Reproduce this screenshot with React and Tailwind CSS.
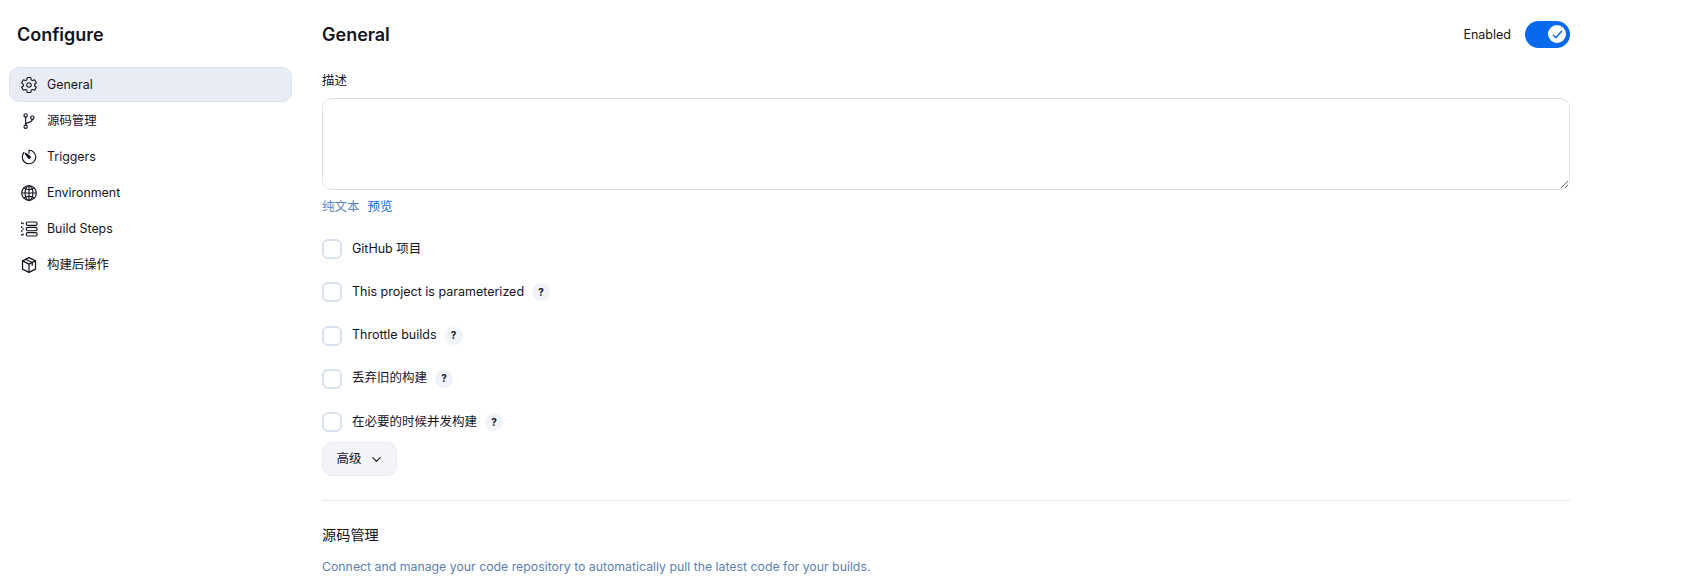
import React from "react";
import {
  IoSettingsOutline,
  IoGitBranchOutline,
  IoTimerOutline,
  IoGlobeOutline,
  IoChevronDownOutline,
  IoCheckmark,
} from "react-icons/io5";

const FONT = { fontFamily: "Inter, 'Noto Sans CJK SC', sans-serif" };

const StepsIcon = ({ className }) => (
  <svg viewBox="0 0 20 20" fill="none" stroke="currentColor" strokeWidth="1.3" className={className}>
    <rect x="7" y="2.2" width="12" height="3.8" rx="1.6" />
    <rect x="7" y="8.1" width="12" height="3.8" rx="1.6" />
    <rect x="7" y="14" width="12" height="3.8" rx="1.6" />
    <path d="M2 2.5v2M2 7v2M2 11v2M2 15.5v2" strokeWidth="1.5" />
    <circle cx="3.4" cy="4" r="0.9" fill="currentColor" stroke="none" />
    <circle cx="3.4" cy="10" r="0.9" fill="currentColor" stroke="none" />
    <circle cx="3.4" cy="16" r="0.9" fill="currentColor" stroke="none" />
  </svg>
);

const BoxIcon = ({ className }) => (
  <svg viewBox="0 0 20 20" fill="none" stroke="currentColor" strokeWidth="1.4" strokeLinejoin="round" className={className}>
    <path d="M10 1.8l7.2 3.6v9.2L10 18.2l-7.2-3.6V5.4z" />
    <path d="M2.8 5.4L10 9l7.2-3.6M10 9v9.2" />
    <path d="M6.2 3.6l7.4 3.6v3.6" />
  </svg>
);

const ICON_CLS = "h-[18px] w-[18px] shrink-0 [&_*]:stroke-[32px]";

const NAV = [
  { label: "General", Icon: IoSettingsOutline, cls: ICON_CLS, active: true },
  { label: "源码管理", Icon: IoGitBranchOutline, cls: ICON_CLS },
  { label: "Triggers", Icon: IoTimerOutline, cls: ICON_CLS },
  { label: "Environment", Icon: IoGlobeOutline, cls: ICON_CLS },
  { label: "Build Steps", Icon: StepsIcon, cls: "h-[18px] w-[18px] shrink-0" },
  { label: "构建后操作", Icon: BoxIcon, cls: "h-[18px] w-[18px] shrink-0" },
];

const OPTIONS = [
  { label: "GitHub 项目" },
  { label: "This project is parameterized", help: true },
  { label: "Throttle builds", help: true },
  { label: "丢弃旧的构建", help: true },
  { label: "在必要的时候并发构建", help: true },
];

const Option = ({ label, help }) => (
  <div className="flex h-[20px] items-center">
    <span className="h-[20px] w-[20px] shrink-0 rounded-[6px] border-2 border-[#d9e1ec] bg-white"></span>
    <span className="ml-[10px] text-[12.5px] text-[#14141f]">{label}</span>
    {help && (
      <span className="ml-[8px] flex h-[18px] w-[18px] items-center justify-center rounded-full bg-[#f0f3f7] text-[10px] font-bold text-[#14141f]">
        ?
      </span>
    )}
  </div>
);

export default function App() {
  return (
    <div className="flex h-[584px] overflow-hidden bg-white" style={FONT}>
      <aside className="w-[322px] shrink-0 pl-[9px]">
        <h1 className="mt-[22px] pl-[8px] text-[18px] leading-[26px] font-semibold text-[#14141f]">Configure</h1>
        <nav className="mt-[19px] flex w-[283px] flex-col gap-[1px]">
          {NAV.map(({ label, Icon, cls, active }) => (
            <div
              key={label}
              className={`flex h-[35px] items-center gap-[9px] rounded-[10px] border pl-[10px] text-[12.4px] ${
                active ? "border-[#dde4ef] bg-[#e8ecf4]" : "border-transparent"
              } text-[#14141f]`}
            >
              <Icon className={cls} />
              <span className="pt-[1px]">{label}</span>
            </div>
          ))}
        </nav>
      </aside>

      <main className="w-[1248px] shrink-0">
        <div className="mt-[20px] flex h-[28px] items-center justify-between">
          <h2 className="text-[18px] font-semibold text-[#14141f]">General</h2>
          <div className="flex items-center gap-[14px]">
            <span className="pt-[2px] text-[12.5px] text-[#14141f]">Enabled</span>
            <span className="flex h-[27px] w-[45px] items-center justify-end rounded-full bg-[#0769eb] pr-[4px]">
              <span className="flex h-[18px] w-[18px] items-center justify-center rounded-full bg-white text-[#0769eb]">
                <IoCheckmark className="h-[13px] w-[13px] [&_*]:stroke-[56px]" />
              </span>
            </span>
          </div>
        </div>

        <div className="mt-[25px] text-[12.5px] leading-[16px] text-[#14141f]">描述</div>
        <textarea className="mt-[9px] block h-[92px] w-full rounded-[10px] border border-[#d9e1ec] bg-white"></textarea>
        <div className="mt-[8px] flex gap-[8px] text-[12.5px] leading-[18px]">
          <span className="text-[#5c85b8]">纯文本</span>
          <span className="text-[#0769eb]">预览</span>
        </div>

        <div className="mt-[23px] flex flex-col gap-[23.25px]">
          {OPTIONS.map((o) => (
            <Option key={o.label} {...o} />
          ))}
        </div>

        <button className="mt-[10px] flex h-[34px] w-[75px] items-center justify-center gap-[8px] rounded-[10px] border border-[#e8ecf2] bg-[#f2f4f8] text-[12.5px] text-[#14141f]">
          <span className="pt-[1px]">高级</span>
          <IoChevronDownOutline className="h-[13px] w-[13px] [&_*]:stroke-[44px]" />
        </button>

        <div className="mt-[24px] border-t border-[#e1e6ef]"></div>

        <h3 className="mt-[23px] text-[14.2px] leading-[22px] font-normal text-[#14141f]">源码管理</h3>
        <p className="mt-[12px] text-[12.3px] leading-[18px] text-[#5c7fb0]">
          Connect and manage your code repository to automatically pull the latest code for your builds.
        </p>
      </main>
    </div>
  );
}
